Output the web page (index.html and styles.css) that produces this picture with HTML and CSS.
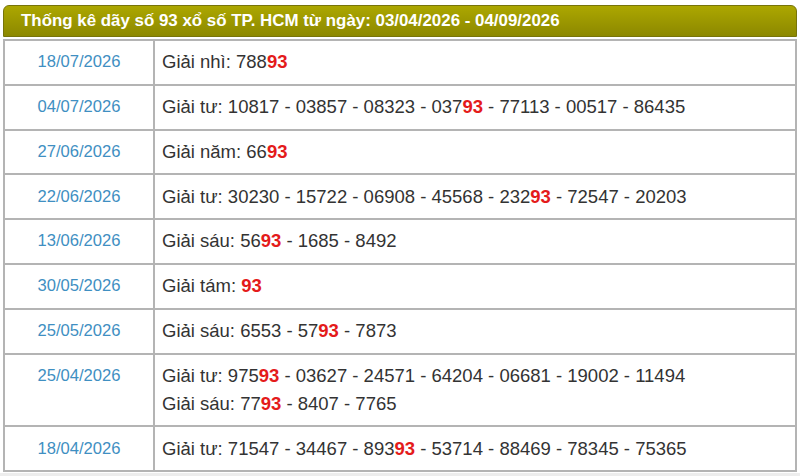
FILE: index.html
```html
<!DOCTYPE html>
<html lang="vi">
<head>
<meta charset="utf-8">
<title>Thống kê dãy số 93</title>
<link rel="stylesheet" href="styles.css">
</head>
<body>
<div class="wrap">
  <div class="title">Thống kê dãy số 93 xổ số TP. HCM từ ngày: 03/04/2026 - 04/09/2026</div>
  <table class="stats">
    <tr><td class="date">18/07/2026</td><td class="res">Giải nhì: 788<b>93</b></td></tr>
    <tr><td class="date">04/07/2026</td><td class="res">Giải tư: 10817 - 03857 - 08323 - 037<b>93</b> - 77113 - 00517 - 86435</td></tr>
    <tr><td class="date">27/06/2026</td><td class="res">Giải năm: 66<b>93</b></td></tr>
    <tr><td class="date">22/06/2026</td><td class="res">Giải tư: 30230 - 15722 - 06908 - 45568 - 232<b>93</b> - 72547 - 20203</td></tr>
    <tr><td class="date">13/06/2026</td><td class="res">Giải sáu: 56<b>93</b> - 1685 - 8492</td></tr>
    <tr><td class="date">30/05/2026</td><td class="res">Giải tám: <b>93</b></td></tr>
    <tr><td class="date">25/05/2026</td><td class="res">Giải sáu: 6553 - 57<b>93</b> - 7873</td></tr>
    <tr><td class="date">25/04/2026</td><td class="res">Giải tư: 975<b>93</b> - 03627 - 24571 - 64204 - 06681 - 19002 - 11494<br>Giải sáu: 77<b>93</b> - 8407 - 7765</td></tr>
    <tr><td class="date">18/04/2026</td><td class="res">Giải tư: 71547 - 34467 - 893<b>93</b> - 53714 - 88469 - 78345 - 75365</td></tr>
  </table>
</div>
</body>
</html>
```
FILE: styles.css
```css
html, body {
  margin: 0;
  padding: 0;
  background: #ededed;
}
body {
  font-family: "Liberation Sans", Arial, sans-serif;
  font-size: 16px;
  color: #333;
}
.wrap {
  width: 794px;
  padding: 5px 3px 1px 3px;
  background: #fff;
}
.title {
  height: 32px;
  box-sizing: border-box;
  padding: 0 0 0 17px;
  line-height: 30px;
  background: linear-gradient(#aca700, #8c8800);
  border: 1px solid #77740a;
  border-radius: 6px 6px 0 0;
  color: #fff;
  font-weight: bold;
  font-size: 16.9px;
  white-space: nowrap;
}
.stats {
  margin-top: 2px;
  width: 100%;
  border-collapse: collapse;
  border: 2px solid #b4b4b4;
}
.stats td {
  border: 2px solid #b4b4b4;
  vertical-align: top;
  padding: 7.3px 7px 7.5px 7px;
  line-height: 28px;
}
.stats td.date {
  width: 134px;
  text-align: center;
  color: #3f8fc2;
  font-size: 16.6px;
}
.stats td.res {
  white-space: nowrap;
  font-size: 18.5px;
}
.stats b {
  color: #e41b1b;
}
```
